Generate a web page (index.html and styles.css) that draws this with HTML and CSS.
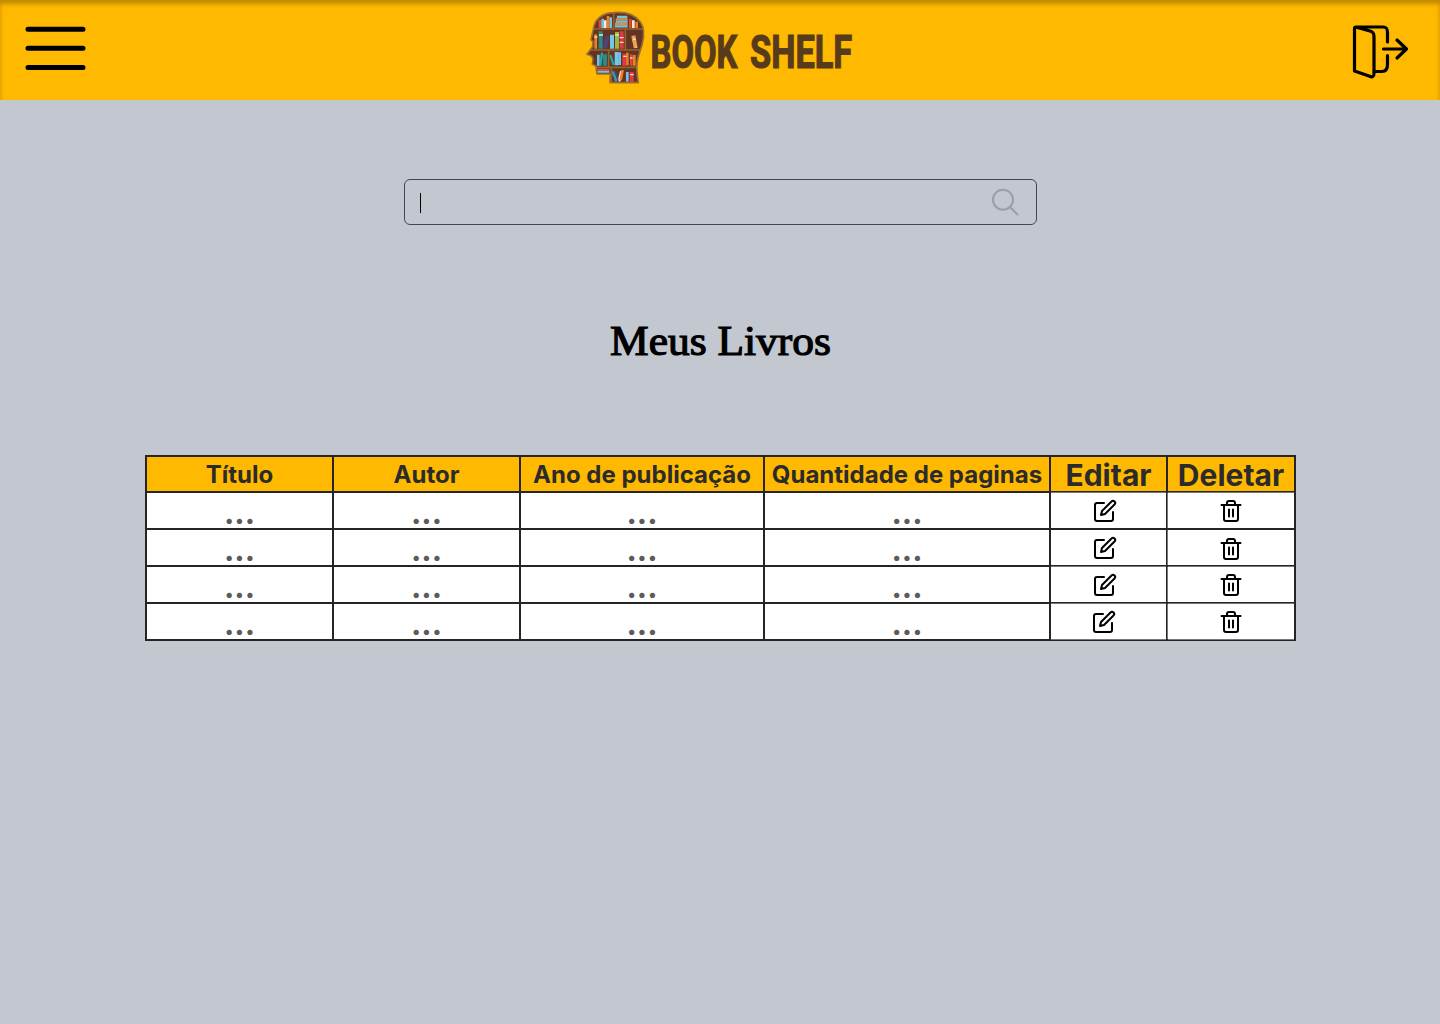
FILE: index.html
```html
<!DOCTYPE html>
<html lang="pt-BR">
<head>
<meta charset="utf-8">
<title>Book Shelf</title>
<link rel="stylesheet" href="styles.css">
</head>
<body>
<svg class="sprite" aria-hidden="true">
  <symbol id="edit" viewBox="0 0 24 24"><path d="M11 4H4a2 2 0 0 0-2 2v14a2 2 0 0 0 2 2h14a2 2 0 0 0 2-2v-7M18.500 2.500a2.121 2.121 0 0 1 3 3L12 15l-4 1 1-4 9.500-9.500z"/></symbol>
  <symbol id="trash" viewBox="0 0 24 24"><path d="M2.500 6H21.500M19 6v14a2 2 0 0 1-2 2H7a2 2 0 0 1-2-2V6M8 6V4a2 2 0 0 1 2-2h4a2 2 0 0 1 2 2v2M10 10.500v7M14 10.500v7"/></symbol>
</svg>
<header class="topbar">
  <svg class="menu" width="62" height="46" viewBox="0 0 62 46"><path d="M3 4.200H58M3 23.300H58M3 42.500H58"/></svg>
  <svg class="brand" width="290" height="100" viewBox="0 0 290 100">
    <defs><clipPath id="head"><path d="M115 38C150 35 180 44 196 66C208 82 208 108 201 135C196 153 188 171 186 190C184 211 187 230 190 249H105L106 222H66L63 198L52 193L54 177L50 168L36 163L53 140L54 125L48 119L55 89C58 59 80 40 115 38Z"/></clipPath></defs>
    <g transform="scale(.33333)">
      <g clip-path="url(#head)">
        <rect class="wood" x="30" y="30" width="180" height="225"/>
        <g stroke-width="8" fill="none">
          <path stroke="#e3482e" d="M75 60V84M166 57V84M169 163V197"/>
          <path stroke="#72c4e6" d="M83 56V84M107 52V84M134 157V195M70 164V197M157 216V245"/>
          <path stroke="#f4eee0" d="M91 61V84M175 61V84M139 214L132 244M174 113L183 144"/>
          <path stroke="#eb8025" d="M99 48V84M185 65V84M62 103V146M157 158V196M178 165V197M143 210L137 240"/>
        </g>
        <path stroke="#e98a3b" stroke-width="7" d="M122 58H158M120 72H158"/>
        <path stroke="#70c8df" stroke-width="7" d="M126 51H157M122 65H158M120 79H158M67 215H103"/>
        <path stroke="#e94b38" stroke-width="5" d="M67 209H103"/>
        <g stroke-width="12">
          <path stroke="#238d88" d="M77 94V146M90 163V197"/>
          <path stroke="#73c7ec" d="M111 104V146M125 156V196"/>
          <path stroke="#98b944" d="M126 96V146"/>
          <path stroke="#de3945" d="M140 94V146M148 161V197M170 216V246"/>
          <path stroke="#54407c" d="M98 108L90 145M116 214L126 244"/>
          <path stroke="#efa04a" d="M175 107L182 143"/>
        </g>
        <path stroke="#25a6a6" stroke-width="7" d="M106 165L116 195M113 214L124 244M81 158L76 197"/>
        <path stroke="#efe2c5" stroke-width="4" d="M58 111H67M72 105H84M120 105H132M134 113H146M134 127H146M145 169H155M165 224H176M174 119L182 117M165 174H173"/>
        <path class="shelf" d="M50 87H210M44 150H205M50 202H192M116 38V87M151 87V150M101 150V202M109 202V249"/>
      </g>
      <path class="outline" d="M115 38C150 35 180 44 196 66C208 82 208 108 201 135C196 153 188 171 186 190C184 211 187 230 190 248H105L106 222H66L63 198L52 193L54 177L50 168L36 163L53 140L54 125L48 119L55 89C58 59 80 40 115 38Z"/>
    </g>
    <text class="brand-name" transform="translate(75.500 68) scale(.73 1)" textLength="119" lengthAdjust="spacingAndGlyphs">BOOK</text>
    <text class="brand-name" transform="translate(175 68) scale(.73 1)" textLength="140" lengthAdjust="spacingAndGlyphs">SHELF</text>
  </svg>
  <svg class="logout" width="58" height="60" viewBox="0 0 58 60"><path d="M3.500 5.500C2.500 5.500 2.500 6.500 2.500 7.500V49.500L17 54.500C20.500 56 22 55.500 22 52V15C22 11.500 21 10.500 18 9.500L3.500 5.500H31C35 5.500 35.500 7.500 35.500 11V20.500M35.500 34V43C35.500 48 33.500 50 30 50H23M31.500 27.500H54.500M45 18.500L54.500 27.500L45 36.500"/></svg>
</header>
<main class="page">
  <div class="search"><span class="caret"></span><svg width="30" height="30" viewBox="0 0 30 30"><circle cx="13" cy="12.700" r="10"/><path d="M20 20L27.500 27.500"/></svg></div>
  <h1><svg width="226" height="54"><text x="3" y="40" textLength="221" lengthAdjust="spacingAndGlyphs">Meus Livros</text></svg></h1>
  <div class="books">
    <div class="th">Título</div><div class="th">Autor</div><div class="th">Ano de publicação</div><div class="th">Quantidade de paginas</div><div class="th big">Editar</div><div class="th big">Deletar</div>
    <div class="td">...</div><div class="td">...</div><div class="td">...</div><div class="td">...</div><div class="act edit up"><svg><use href="#edit"/></svg></div><div class="act del up"><svg><use href="#trash"/></svg></div>
    <div class="td">...</div><div class="td">...</div><div class="td">...</div><div class="td">...</div><div class="act edit"><svg><use href="#edit"/></svg></div><div class="act del low"><svg><use href="#trash"/></svg></div>
    <div class="td">...</div><div class="td">...</div><div class="td">...</div><div class="td">...</div><div class="act edit up"><svg><use href="#edit"/></svg></div><div class="act del up"><svg><use href="#trash"/></svg></div>
    <div class="td">...</div><div class="td">...</div><div class="td">...</div><div class="td">...</div><div class="act edit up down last"><svg><use href="#edit"/></svg></div><div class="act del up down"><svg><use href="#trash"/></svg></div>
  </div>
</main>
</body>
</html>
```
FILE: styles.css
```css
* { box-sizing: border-box; }
body { margin: 0; min-height: 1024px; background: #c3c7cf; font-family: Inter, sans-serif; }
svg { display: block; flex: none; }
.sprite { position: absolute; width: 0; height: 0; }
.topbar { height: 100px; display: grid; grid-template-columns: 1fr auto 1fr; background: #ffb900; box-shadow: inset 0 4px 4px rgba(0,0,0,.25); }
.menu { margin: 25px 0 0 25px; fill: none; stroke: #000; stroke-width: 5; stroke-linecap: round; }
.brand { overflow: visible; }
.logout { margin: 22px 30px 0 0; justify-self: end; fill: none; stroke: #000; stroke-width: 3.2; stroke-linecap: round; stroke-linejoin: round; }
.logout path { transform: translate(0, -.5px); }
.wood { fill: #633323; }
.shelf { fill: none; stroke: #94642f; stroke-width: 5; }
.outline { fill: none; stroke: #9b6b32; stroke-width: 5; stroke-linejoin: round; }
.brand-name { font: 700 46px Roboto, sans-serif; fill: #583b1b; stroke: #583b1b; stroke-width: 1.2; }
.page { display: flex; flex-direction: column; align-items: center; padding-top: 79px; }
.search { width: 633px; height: 46px; display: flex; align-items: center; justify-content: space-between; padding: 0 16px 0 15px; border: 1px solid #474554; border-radius: 6px; }
.search svg { fill: none; stroke: #9c9cac; stroke-width: 2; stroke-linecap: round; }
.caret { width: 1px; height: 20px; margin-top: 2px; background: #000; }
h1 { margin: 90px 0 0; font: 400 42px "Liberation Serif", serif; }
h1 text { stroke: #000; stroke-width: 1.2; }
.books { display: grid; grid-template-columns: 185px 185px 242px 284px 115px 126px; grid-template-rows: 34px repeat(4, 35px); gap: 2px; padding: 2px; margin-top: 86px; background: #252525; }
.th { display: flex; align-items: center; justify-content: center; background: #ffb900; color: #2b2b2b; font-size: 24px; font-weight: 700; white-space: nowrap; padding: 1px 0 0 1px; }
.big { font-size: 30px; }
.td { display: flex; align-items: flex-end; justify-content: center; background: #fff; color: #5b5b5b; font-size: 31px; line-height: 31px; font-weight: 700; padding-left: 1px; }
.act { display: flex; align-items: center; justify-content: center; background: #fff; }
.act svg { width: 24px; height: 24px; fill: none; stroke: #000; stroke-width: 2; stroke-linecap: round; stroke-linejoin: round; }
.edit { padding-right: 7px; }
.last { padding-right: 9px; }
.del { padding-left: 1px; box-shadow: -1px 0 #777; }
.low { padding-top: 2px; }
.up { box-shadow: 0 -1px #777; }
.down { box-shadow: 0 -1px #777, 0 1px #777; }
.del.up { box-shadow: 0 -1px #777, -1px 0 #777; }
.del.down { box-shadow: 0 -1px #777, 0 1px #777, -1px 0 #777; }
```
